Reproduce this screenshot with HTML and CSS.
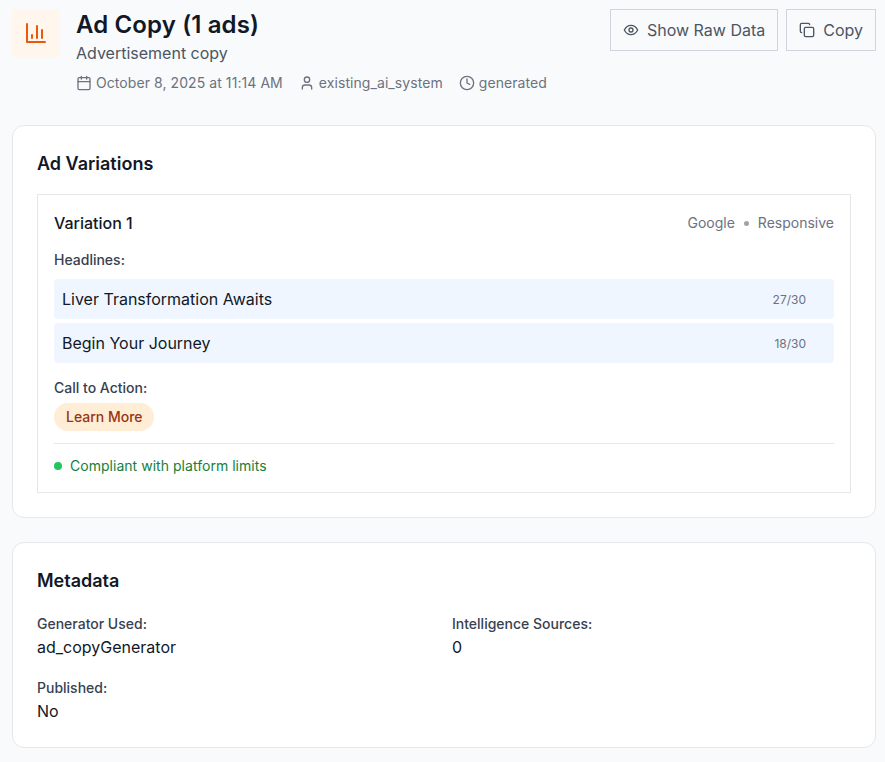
FILE: index.html
```html
<!DOCTYPE html>
<html lang="en">
<head>
  <meta charset="UTF-8" />
  <title>Ad Copy (1 ads)</title>
  <meta name="viewport" content="width=device-width, initial-scale=1.0" />
  <link rel="stylesheet" href="styles.css">
</head>
<body>

  <header class="page-header">
    <div class="header-icon">
      <svg width="24" height="24" viewBox="0 0 24 24" fill="none" stroke="currentColor" stroke-width="2" stroke-linecap="round" stroke-linejoin="round">
        <path d="M3 3v18h18" />
        <path d="M8 17v-3" />
        <path d="M13 17V5" />
        <path d="M18 17V9" />
      </svg>
    </div>
    <div class="header-text">
      <h1>Ad Copy (1 ads)</h1>
      <p class="subtitle">Advertisement copy</p>
      <div class="meta-row">
        <span class="meta-item">
          <svg class="meta-icon" viewBox="0 0 24 24"><rect x="3" y="4" width="18" height="18" rx="2" /><path d="M16 2v4M8 2v4M3 10h18" /></svg>
          October 8, 2025 at 11:14 AM
        </span>
        <span class="meta-item">
          <svg class="meta-icon" viewBox="0 0 24 24"><path d="M19 21v-2a4 4 0 0 0-4-4H9a4 4 0 0 0-4 4v2" /><circle cx="12" cy="7" r="4" /></svg>
          existing_ai_system
        </span>
        <span class="meta-item">
          <svg class="meta-icon" viewBox="0 0 24 24"><circle cx="12" cy="12" r="10" /><path d="M12 6v6l4 2" /></svg>
          generated
        </span>
      </div>
    </div>
    <div class="header-actions">
      <button class="btn">
        <svg class="btn-icon" viewBox="0 0 24 24"><path d="M2 12s3.5-7 10-7 10 7 10 7-3.5 7-10 7-10-7-10-7Z" /><circle cx="12" cy="12" r="3" /></svg>
        Show Raw Data
      </button>
      <button class="btn">
        <svg class="btn-icon" viewBox="0 0 24 24"><rect x="8" y="8" width="14" height="14" rx="2" /><path d="M4 16c-1.1 0-2-.9-2-2V4c0-1.1.9-2 2-2h10c1.1 0 2 .9 2 2" /></svg>
        Copy
      </button>
    </div>
  </header>

  <section class="card">
    <h2>Ad Variations</h2>
    <div class="variation">
      <div class="variation-head">
        <h3>Variation 1</h3>
        <div class="variation-tags">
          <span>Google</span>
          <span class="tag-dot"></span>
          <span>Responsive</span>
        </div>
      </div>
      <div class="field-label">Headlines:</div>
      <div class="headline">
        <span>Liver Transformation Awaits</span>
        <span class="char-count">27/30</span>
      </div>
      <div class="headline">
        <span>Begin Your Journey</span>
        <span class="char-count">18/30</span>
      </div>
      <div class="field-label cta-label">Call to Action:</div>
      <span class="cta">Learn More</span>
      <div class="compliance">
        <span class="compliance-dot"></span>
        Compliant with platform limits
      </div>
    </div>
  </section>

  <section class="card">
    <h2>Metadata</h2>
    <div class="meta-grid">
      <div>
        <div class="field-label">Generator Used:</div>
        <div class="meta-value">ad_copyGenerator</div>
      </div>
      <div>
        <div class="field-label">Intelligence Sources:</div>
        <div class="meta-value">0</div>
      </div>
      <div>
        <div class="field-label">Published:</div>
        <div class="meta-value">No</div>
      </div>
    </div>
  </section>

</body>
</html>
```

FILE: styles.css
```css
* {
  box-sizing: border-box;
}

body {
  font-family: Inter, "Liberation Sans", sans-serif;
  margin: 0;
  padding: 9px 9px 14px 12px;
  background-color: #f9fafb;
  color: #111827;
}

.page-header {
  display: flex;
  align-items: flex-start;
  gap: 16px;
  margin-bottom: 32px;
}

.header-icon {
  flex-shrink: 0;
  width: 48px;
  height: 48px;
  display: flex;
  align-items: center;
  justify-content: center;
  background-color: #fff7ed;
  color: #ea580c;
}

.header-text {
  flex: 1;
}

h1 {
  margin: 0;
  font-size: 24px;
  line-height: 32px;
  font-weight: 600;
  letter-spacing: 0.13px;
}

.subtitle {
  margin: 0;
  font-size: 16px;
  line-height: 24px;
  color: #4b5563;
}

.meta-row {
  display: flex;
  gap: 16px;
  margin-top: 8px;
  font-size: 14px;
  line-height: 20px;
  letter-spacing: 0.07px;
  color: #6b7280;
}

.meta-item {
  display: flex;
  align-items: center;
  gap: 4px;
}

.meta-icon {
  width: 16px;
  height: 16px;
  fill: none;
  stroke: currentColor;
  stroke-width: 2;
  stroke-linecap: round;
  stroke-linejoin: round;
}

.header-actions {
  display: flex;
  gap: 8px;
}

.btn {
  display: flex;
  align-items: center;
  gap: 8px;
  height: 42px;
  padding: 0 12px;
  font-family: inherit;
  font-size: 16px;
  color: #4b5563;
  background-color: transparent;
  border: 1px solid #d1d5db;
}

.btn-icon {
  width: 16px;
  height: 16px;
  fill: none;
  stroke: currentColor;
  stroke-width: 2;
  stroke-linecap: round;
  stroke-linejoin: round;
}

.card {
  padding: 24px;
  margin-bottom: 24px;
  background-color: #fff;
  border: 1px solid #e5e7eb;
  border-radius: 12px;
}

h2 {
  margin: 0 0 16px;
  font-size: 18px;
  line-height: 28px;
  font-weight: 600;
}

.variation {
  padding: 16px;
  border: 1px solid #e5e7eb;
}

.variation-head {
  display: flex;
  align-items: center;
  justify-content: space-between;
  margin-bottom: 15px;
}

h3 {
  margin: 0;
  font-size: 16px;
  line-height: 24px;
  font-weight: 500;
}

.variation-tags {
  display: flex;
  align-items: center;
  gap: 8px;
  font-size: 14px;
  line-height: 20px;
  color: #6b7280;
}

.tag-dot {
  width: 5px;
  height: 5px;
  margin: 1px 1px 0;
  border-radius: 50%;
  background-color: #9ca3af;
}

.field-label {
  font-size: 14px;
  line-height: 20px;
  font-weight: 500;
  color: #374151;
}

.headline {
  display: flex;
  align-items: center;
  justify-content: space-between;
  height: 40px;
  margin-top: 4px;
  padding: 0 28px 0 8px;
  font-size: 16px;
  background-color: #eff6ff;
  border-radius: 4px;
}

.field-label + .headline {
  margin-top: 9px;
}

.char-count {
  font-size: 12px;
  color: #6b7280;
}

.cta-label {
  margin-top: 15px;
}

.cta {
  display: inline-block;
  margin-top: 5px;
  padding: 4px 11px 4px 12px;
  font-size: 14px;
  line-height: 20px;
  font-weight: 500;
  color: #9a3412;
  background-color: #ffedd5;
  border-radius: 14px;
}

.compliance {
  display: flex;
  align-items: center;
  gap: 8px;
  margin-top: 12px;
  padding-top: 12px;
  font-size: 14px;
  line-height: 20px;
  letter-spacing: 0.03px;
  color: #15803d;
  border-top: 1px solid #e5e7eb;
}

.compliance-dot {
  width: 8px;
  height: 8px;
  border-radius: 50%;
  background-color: #22c55e;
}

.meta-grid {
  display: grid;
  grid-template-columns: 1fr 1fr;
  gap: 19px 16px;
  margin-top: 19px;
}

.meta-value {
  margin-top: 1px;
  font-size: 16px;
  line-height: 24px;
}
```
